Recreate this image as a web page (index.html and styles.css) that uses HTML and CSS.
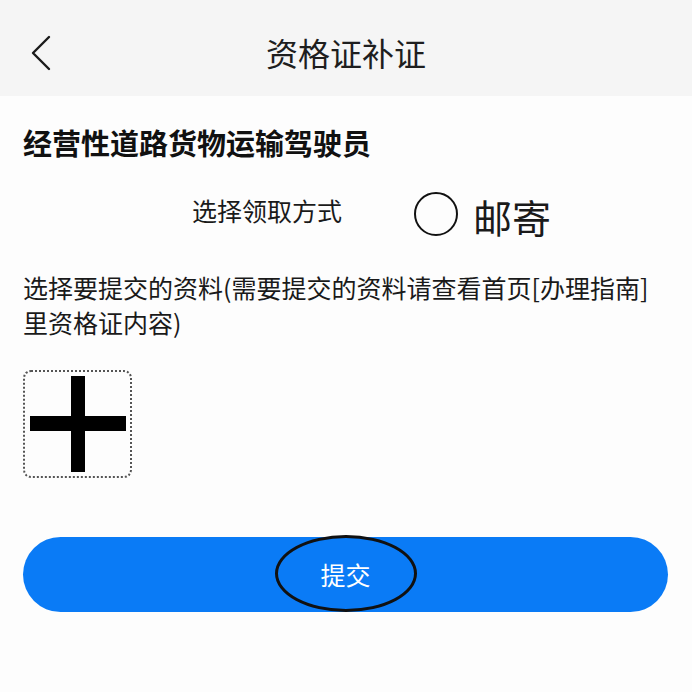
FILE: index.html
```html
<!DOCTYPE html>
<html lang="zh-CN">
<head>
<meta charset="utf-8">
<link rel="stylesheet" href="styles.css">
</head>
<body>
<header class="topbar">
  <span class="back">
    <svg width="22" height="36" viewBox="0 0 22 36"><path d="M19 2 L3 18 L19 34" fill="none" stroke="#1a1a1a" stroke-width="2.4" stroke-linecap="round" stroke-linejoin="round"/></svg>
  </span>
  <h1 class="title">资格证补证</h1>
</header>
<main class="content">
  <h2 class="heading">经营性道路货物运输驾驶员</h2>
  <div class="pick-row">
    <span class="pick-label">选择领取方式</span>
    <span class="radio"></span>
    <span class="radio-text">邮寄</span>
  </div>
  <p class="desc"><span class="line">选择要提交的资料(需要提交的资料请查看首页[办理指南]</span><br><span class="line">里资格证内容)</span></p>
  <div class="upload">
    <svg width="96" height="96" viewBox="0 0 96 96"><rect x="0" y="40" width="96" height="15" fill="#000"/><rect x="41" y="0" width="14" height="96" fill="#000"/></svg>
  </div>
  <div class="submit">
    <span class="submit-text">提交</span>
    <span class="mark"></span>
  </div>
</main>
</body>
</html>
```
FILE: styles.css
```css
html, body {
  margin: 0;
  padding: 0;
  background: #fdfdfd;
  font-family: "Noto Sans CJK SC", "Noto Sans", sans-serif;
  color: #1a1a1a;
}
.topbar {
  position: relative;
  height: 96px;
  box-sizing: border-box;
  padding-top: 8px;
  background: #f5f5f5;
  display: flex;
  align-items: center;
  justify-content: center;
}
.back {
  position: absolute;
  left: 30px;
  top: 35px;
  display: flex;
}
.title {
  margin: 0;
  font-size: 32px;
  line-height: 32px;
  font-weight: 400;
  color: #1e1e1e;
}
.content {
  padding: 0 24px 0 23px;
}
.heading {
  margin: 32px 0 0;
  font-size: 29px;
  line-height: 29px;
  font-weight: 700;
  color: #111;
}
.pick-row {
  margin-top: 35px;
  height: 44px;
  display: flex;
  align-items: center;
  padding-left: 169px;
}
.pick-label {
  font-size: 25px;
  line-height: 25px;
  margin-top: -8px;
}
.radio {
  margin-left: 72px;
  width: 40px;
  height: 40px;
  border: 2.5px solid #111;
  border-radius: 50%;
}
.radio-text {
  margin-left: 15px;
  font-size: 39px;
  line-height: 39px;
  margin-top: 4px;
}
.desc {
  margin: 34px 0 0;
  font-size: 25px;
  line-height: 35px;
  white-space: nowrap;
}
.upload {
  margin-top: 30px;
  width: 109px;
  height: 108px;
  box-sizing: border-box;
  border: 2px dotted #555;
  border-radius: 8px;
  display: flex;
  align-items: center;
  justify-content: center;
}
.submit {
  position: relative;
  margin-top: 59px;
  height: 75px;
  border-radius: 38px;
  background: #0a7bf6;
  display: flex;
  align-items: center;
  justify-content: center;
}
.submit-text {
  color: #fff;
  font-size: 25px;
  line-height: 25px;
}
.mark {
  position: absolute;
  left: 252px;
  top: -2px;
  width: 142px;
  height: 77px;
  box-sizing: border-box;
  border: 3px solid #111;
  border-radius: 50%;
}
```
